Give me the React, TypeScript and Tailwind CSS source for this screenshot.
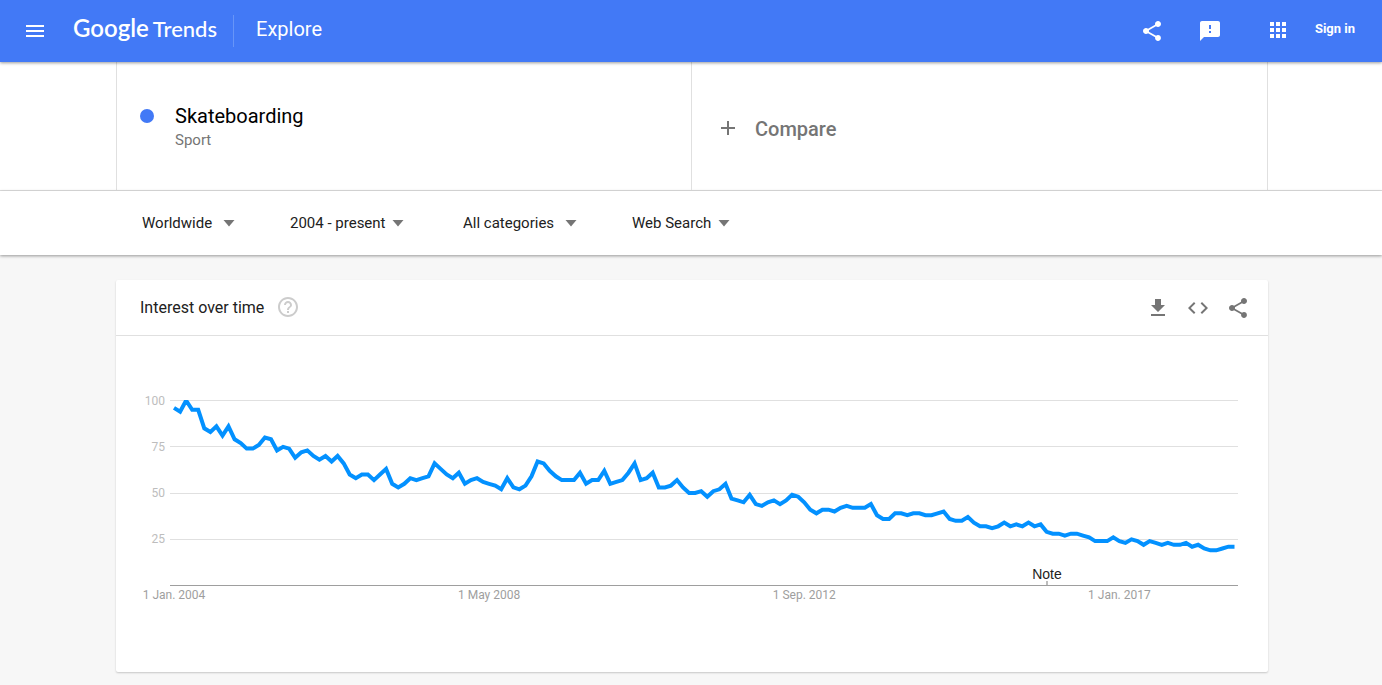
import { useState } from "react";

// monthly index, Jan 2004 onwards
const DATA = [
  96, 94, 100, 95, 95, 85, 83, 86, 81, 86, 79, 77,
  74, 74, 76, 80, 79, 73, 75, 74, 69, 72, 73, 70,
  68, 70, 67, 70, 66, 60, 58, 60, 60, 57, 60, 63,
  55, 53, 55, 58, 57, 58, 59, 66, 63, 60, 58, 61,
  55, 57, 58, 56, 55, 54, 52, 58, 53, 52, 54, 59,
  67, 66, 62, 59, 57, 57, 57, 61, 55, 57, 57, 62,
  55, 56, 57, 61, 66, 57, 58, 61, 53, 53, 54, 57,
  53, 50, 50, 51, 48, 51, 52, 55, 47, 46, 45, 49,
  44, 43, 45, 46, 44, 46, 49, 48, 45, 41, 39, 41,
  41, 40, 42, 43, 42, 42, 42, 44, 38, 36, 36, 39,
  39, 38, 39, 39, 38, 38, 39, 40, 36, 35, 35, 37,
  34, 32, 32, 31, 32, 34, 32, 33, 32, 34, 32, 33,
  29, 28, 28, 27, 28, 28, 27, 26, 24, 24, 24, 26,
  24, 23, 25, 24, 22, 24, 23, 22, 23, 22, 22, 23,
  21, 22, 20, 19, 19, 20, 21, 21,
];

const ICONS = {
  menu: "M3 18h18v-2H3v2zm0-5h18v-2H3v2zm0-7v2h18V6H3z",
  share: "M18 16.08c-.76 0-1.44.3-1.96.77L8.91 12.7c.05-.23.09-.46.09-.7s-.04-.47-.09-.7l7.05-4.11c.54.5 1.25.81 2.04.81 1.66 0 3-1.34 3-3s-1.34-3-3-3-3 1.34-3 3c0 .24.04.47.09.7L8.04 9.81C7.5 9.31 6.79 9 6 9c-1.66 0-3 1.34-3 3s1.34 3 3 3c.79 0 1.5-.31 2.04-.81l7.12 4.16c-.05.21-.08.43-.08.65 0 1.61 1.31 2.92 2.92 2.92s2.92-1.31 2.92-2.92-1.31-2.92-2.92-2.92z",
  feedback: "M20 2H4c-1.1 0-1.99.9-1.99 2L2 22l4-4h14c1.1 0 2-.9 2-2V4c0-1.1-.9-2-2-2zm-7 12h-2v-2h2v2zm0-4h-2V6h2v4z",
  apps: "M4 8h4V4H4v4zm6 12h4v-4h-4v4zm-6 0h4v-4H4v4zm0-6h4v-4H4v4zm6 0h4v-4h-4v4zm6-10v4h4V4h-4zm-6 4h4V4h-4v4zm6 6h4v-4h-4v4zm0 6h4v-4h-4v4z",
  add: "M19 13h-6v6h-2v-6H5v-2h6V5h2v6h6v2z",
  caret: "M6.5 9h11L12 15.5z",
  help: "M11 18h2v-2h-2v2zm1-16C6.48 2 2 6.48 2 12s4.48 10 10 10 10-4.48 10-10S17.52 2 12 2zm0 18c-4.41 0-8-3.59-8-8s3.59-8 8-8 8 3.59 8 8-3.59 8-8 8zm0-14c-2.21 0-4 1.79-4 4h2c0-1.1.9-2 2-2s2 .9 2 2c0 2-3 1.75-3 5h2c0-2.25 3-2.5 3-5 0-2.21-1.79-4-4-4z",
  download: "M19 9h-4V3H9v6H5l7 7 7-7zM5 18v2h14v-2H5z",
  code: "M9.4 16.6L4.8 12l4.6-4.6L8 6l-6 6 6 6 1.4-1.4zm5.2 0l4.6-4.6-4.6-4.6L16 6l6 6-6 6-1.4-1.4z",
};

function Icon({ name, className = "" }: { name: keyof typeof ICONS; className?: string }) {
  return (
    <svg viewBox="0 0 24 24" fill="currentColor" aria-hidden="true"
         className={`size-6 shrink-0 ${className}`}>
      <path d={ICONS[name]} />
    </svg>
  );
}

function Filter({ label, options, wide = false }: {
  label: string;
  options: string[];
  wide?: boolean;
}) {
  const [value, setValue] = useState(options[0]);
  return (
    <label className={`flex items-center ${wide ? "" : "mr-1"}`}>
      <select aria-label={label} value={value} onChange={(e) => setValue(e.target.value)}
              className={`cursor-pointer appearance-none bg-transparent text-[15px] leading-6 text-[#212121] outline-none ${wide ? "pr-1" : ""}`}>
        {options.map((o) => <option key={o}>{o}</option>)}
      </select>
      <Icon name="caret" className="text-[#757575]" />
    </label>
  );
}

const LEFT = 58, STEP = 6.06, BASE = 249.5, TOP = 64.5;
const px = (i: number) => LEFT + i * STEP;
const py = (v: number) => BASE - (v * (BASE - TOP)) / 100;

function Chart() {
  const points = DATA.map((v, i) => `${px(i).toFixed(1)},${py(v).toFixed(1)}`).join(" ");
  const ticks = [
    { i: 0, text: "1 Jan. 2004" },
    { i: 52, text: "1 May 2008" },
    { i: 104, text: "1 Sep. 2012" },
    { i: 156, text: "1 Jan. 2017" },
  ];
  return (
    <svg viewBox="0 0 1152 336" role="img" aria-label="Interest over time"
         className="block w-full font-[Roboto,sans-serif]">
      <clipPath id="plot"><rect x="54" y="64" width="1068" height="186" /></clipPath>
      {[100, 75, 50, 25].map((v) => (
        <g key={v}>
          <line x1="54" x2="1122" y1={Math.floor(py(v)) + 0.5} y2={Math.floor(py(v)) + 0.5}
                stroke="#e0e0e0" />
          <text x="49" y={Math.floor(py(v) + 4.5)} textAnchor="end" fontSize="12" fill="#bdbdbd">
            {v}
          </text>
        </g>
      ))}
      <line x1="54" x2="1122" y1={BASE} y2={BASE} stroke="#9e9e9e" />
      <rect x="930" y="245" width="2" height="4" fill="#bdbdbd" />
      <text x="931" y="243" textAnchor="middle" fontSize="14" fill="#222"
            className="font-['Liberation_Sans',Arial,sans-serif]">
        Note
      </text>
      {ticks.map((t) => (
        <text key={t.i} x={px(t.i)} y="263" textAnchor="middle" fontSize="12" fill="#9e9e9e">
          {t.text}
        </text>
      ))}
      <polyline points={points} fill="none" stroke="#0391ff" strokeWidth="4"
                clipPath="url(#plot)" />
    </svg>
  );
}

export default function App() {
  return (
    <div className="min-h-screen bg-[#f7f7f7] pb-3 font-[Roboto,sans-serif] text-[#212121]">
      <header className="relative z-10 flex h-[62px] items-center bg-[#4279f6] pr-[27px] pl-[23px] text-white shadow-[0_1px_3px_rgba(0,0,0,0.4)]">
        <button aria-label="Main menu"><Icon name="menu" /></button>
        <a href="#" className="ml-[26px] flex items-baseline gap-1 pb-[5px] font-[Lato,sans-serif] leading-8">
          <span className="text-2xl font-semibold">Google</span>
          <span className="text-[22px] font-medium">Trends</span>
        </a>
        <div className="ml-4 h-8 w-px bg-[#6795f8]" />
        <h1 className="ml-[22px] pb-1 text-xl">Explore</h1>
        <div className="ml-auto flex items-center">
          <button aria-label="Share"><Icon name="share" /></button>
          <button aria-label="Send feedback" className="ml-[34px]"><Icon name="feedback" /></button>
          <button aria-label="Google apps" className="ml-11 pb-0.5"><Icon name="apps" /></button>
          <a href="#" className="ml-[25px] pb-1 text-[13px] font-bold">Sign in</a>
        </div>
      </header>

      <section className="border-b border-[#e0e0e0] bg-white pr-[114px] pl-[116px]">
        <div className="flex h-32 border-x border-[#e0e0e0]">
          <div className="flex flex-1 pt-[42px] pl-[23px]">
            <span className="mt-[5px] size-3.5 rounded-full bg-[#4279f6]" />
            <div className="ml-[21px]">
              <h2 className="text-xl leading-6 text-black">Skateboarding</h2>
              <p className="text-[15px] leading-6 text-[#757575]">Sport</p>
            </div>
          </div>
          <button className="flex flex-1 items-center border-l border-[#e0e0e0] pt-1.5 pl-6 text-left text-xl font-medium text-[#757575]">
            <Icon name="add" className="mb-0.5" />
            <span className="ml-[15px]">Compare</span>
          </button>
        </div>
      </section>

      <nav className="flex h-16 items-center gap-[49px] bg-white pl-[142px] shadow-[0_1px_3px_rgba(0,0,0,0.4)]">
        <Filter label="Region" options={["Worldwide"]} wide />
        <Filter label="Time range" options={["2004 - present"]} />
        <Filter label="Category" options={["All categories"]} wide />
        <Filter label="Search type" options={["Web Search"]} />
      </nav>

      <main className="mt-[25px] mr-[114px] ml-[116px] rounded-xs bg-white shadow-[0_1px_2px_rgba(0,0,0,0.2)]">
        <div className="flex h-14 items-center border-b border-[#e0e0e0] pr-[18px] pl-6">
          <h2 className="text-base">Interest over time</h2>
          <button aria-label="Help" className="ml-3 pb-0.5 text-[#cccccc]"><Icon name="help" /></button>
          <div className="ml-auto flex gap-4 text-[#757575]">
            <button aria-label="Download CSV"><Icon name="download" /></button>
            <button aria-label="Embed"><Icon name="code" /></button>
            <button aria-label="Share chart"><Icon name="share" /></button>
          </div>
        </div>
        <Chart />
      </main>
    </div>
  );
}
